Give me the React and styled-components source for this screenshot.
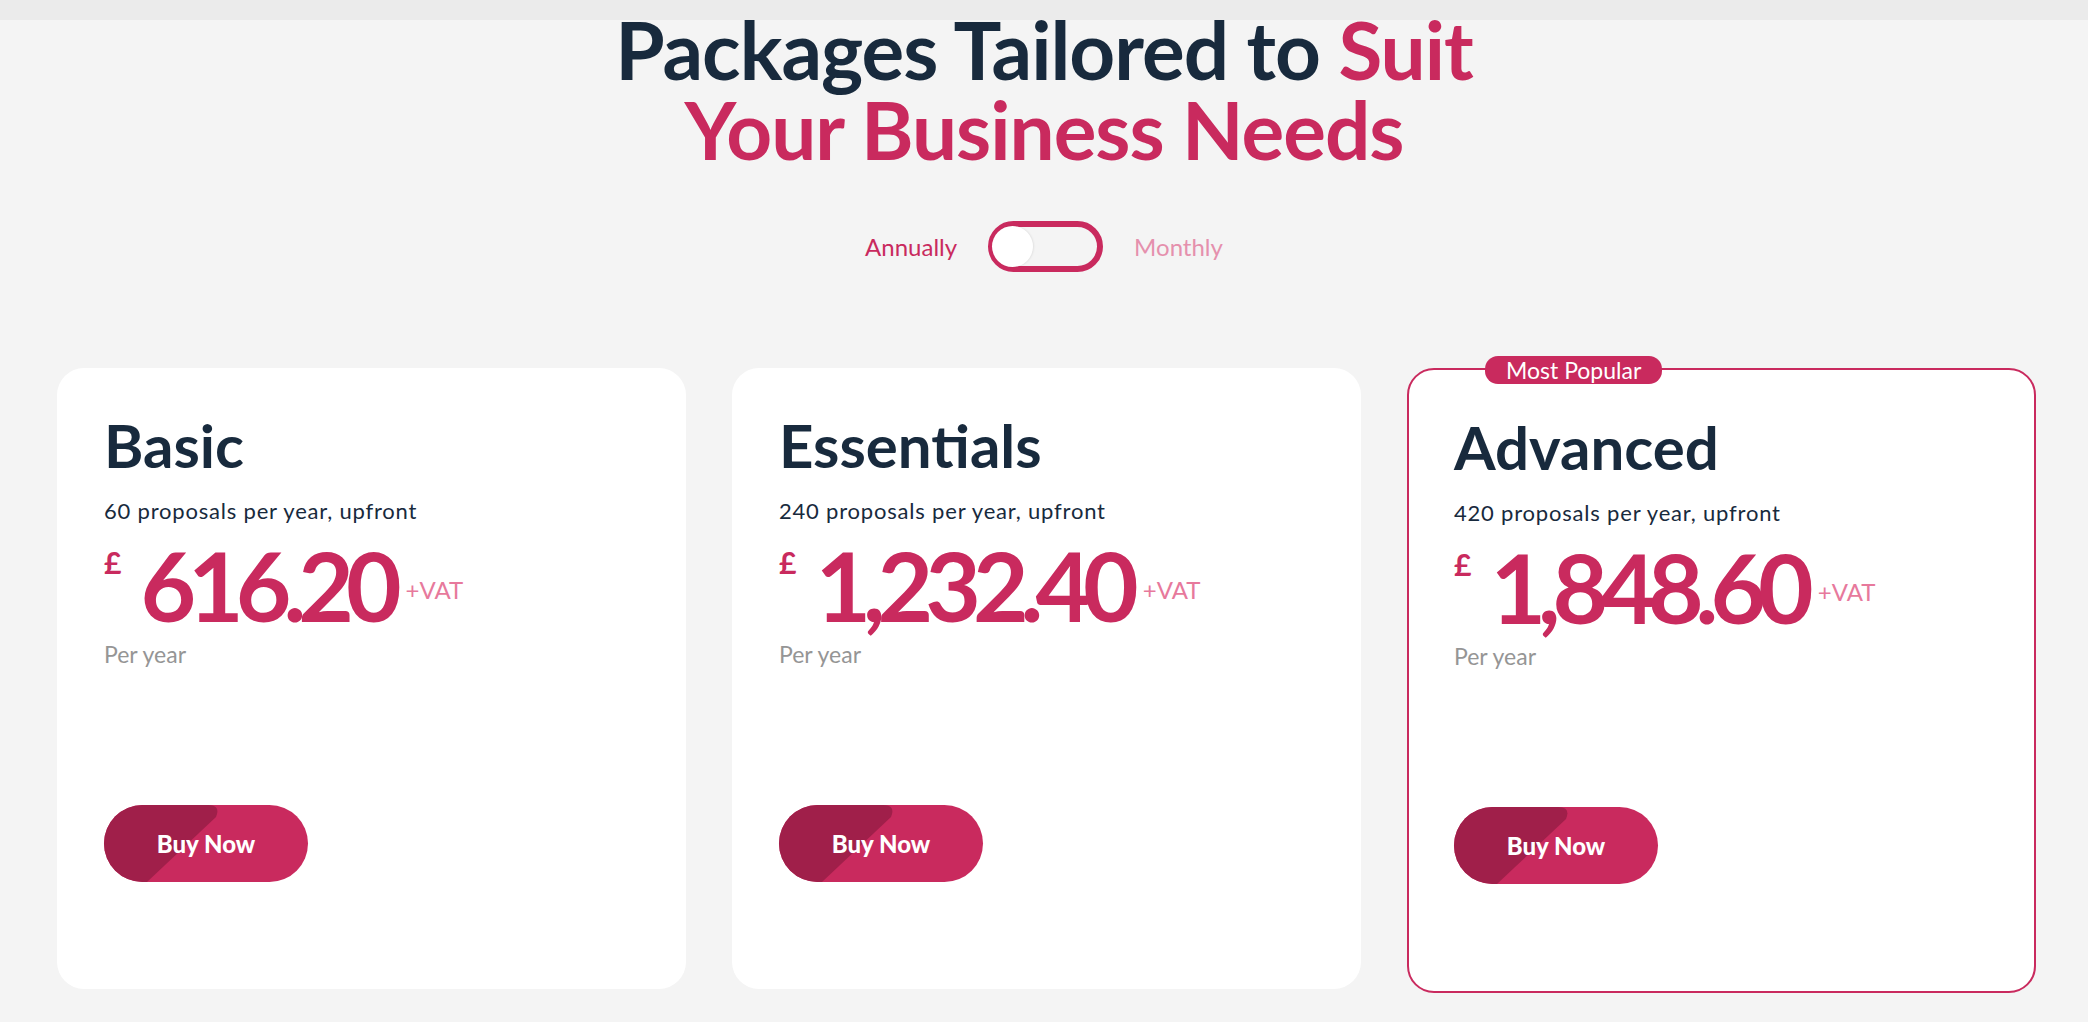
import React, { useState } from 'react';
import styled, { createGlobalStyle } from 'styled-components';

const GlobalStyle = createGlobalStyle`
  body {
    margin: 0;
    background: #f4f4f4;
    font-family: Lato, 'Liberation Sans', sans-serif;
  }
`;

const navy = '#182a3d';
const pink = '#c92a5e';

const Page = styled.div`
  min-height: 1022px;
  background: #f4f4f4;
`;

const TopBar = styled.div`
  height: 20px;
  background: #ebebeb;
`;

const Heading = styled.h1`
  margin: -11px 0 0;
  text-align: center;
  font-size: 80px;
  line-height: 80px;
  font-weight: 700;
  letter-spacing: -1px;
  color: ${navy};

  span {
    color: ${pink};
  }
`;

const ToggleRow = styled.div`
  display: flex;
  justify-content: center;
  align-items: center;
  gap: 31px;
  margin-top: 52px;
`;

const ToggleLabel = styled.span`
  font-size: 24px;
  color: ${({ $active }) => ($active ? pink : '#e590ad')};
  cursor: pointer;
`;

const Track = styled.button`
  position: relative;
  width: 115px;
  height: 51px;
  box-sizing: border-box;
  border: 6px solid ${pink};
  border-radius: 26px;
  background: #f4f4f4;
  padding: 0;
  cursor: pointer;
`;

const Knob = styled.span`
  position: absolute;
  top: -1px;
  left: ${({ $right }) => ($right ? '62px' : '-2px')};
  width: 41px;
  height: 41px;
  border-radius: 50%;
  background: #fff;
  box-shadow: 1px 0 2px rgba(0, 0, 0, 0.08);
`;

const Cards = styled.div`
  display: grid;
  grid-template-columns: repeat(3, 629px);
  gap: 46px;
  padding: 0 52px 0 57px;
  margin-top: 96px;
  align-items: start;
`;

const Card = styled.div`
  position: relative;
  box-sizing: border-box;
  height: ${({ $featured }) => ($featured ? '625px' : '621px')};
  padding: ${({ $featured }) => ($featured ? '41px 45px' : '41px 47px')};
  background: #fff;
  border-radius: 27px;
  border: ${({ $featured }) => ($featured ? `2px solid ${pink}` : 'none')};
  display: flex;
  flex-direction: column;
  align-items: flex-start;
`;

const Badge = styled.div`
  position: absolute;
  top: -14px;
  left: 76px;
  height: 28px;
  padding: 0 21px;
  border-radius: 13px;
  background: ${pink};
  color: #fff;
  font-size: 23px;
  line-height: 28px;
`;

const PlanName = styled.h2`
  margin: 0;
  font-size: 60px;
  line-height: 1.2;
  font-weight: 700;
  color: ${navy};
`;

const Desc = styled.p`
  margin: 17px 0 0;
  font-size: 22px;
  line-height: 1.2;
  letter-spacing: 0.8px;
  color: ${navy};
`;

const PriceRow = styled.div`
  display: flex;
  align-items: flex-start;
  margin-top: 13px;
`;

const Currency = styled.span`
  font-size: 30px;
  line-height: 1;
  font-weight: 700;
  color: ${pink};
  margin: 10px 19px 0 0;
`;

const Amount = styled.span`
  font-size: 96px;
  line-height: 1;
  font-weight: 700;
  letter-spacing: -8px;
  color: ${pink};
`;

const Vat = styled.span`
  font-size: 24px;
  line-height: 1;
  color: #e7799c;
  margin: 41px 0 0 12px;
`;

const PerYear = styled.div`
  margin-top: 8px;
  font-size: 23px;
  line-height: 1.2;
  color: #959595;
`;

const BuyButton = styled.button`
  position: relative;
  overflow: hidden;
  margin-top: 136px;
  width: 204px;
  height: 77px;
  border: none;
  border-radius: 39px;
  background: ${pink};
  color: #fff;
  font-family: inherit;
  font-size: 24px;
  font-weight: 900;
  cursor: pointer;

  svg {
    position: absolute;
    left: 0;
    top: 0;
  }

  span {
    position: relative;
  }
`;

const plans = [
  { name: 'Basic', desc: '60 proposals per year, upfront', price: '616.20' },
  { name: 'Essentials', desc: '240 proposals per year, upfront', price: '1,232.40' },
  { name: 'Advanced', desc: '420 proposals per year, upfront', price: '1,848.60', featured: true },
];

const Shade = () => (
  <svg width="204" height="77" viewBox="0 0 204 77">
    <path d="M0 0 H104 Q117 0 112 12 L43 77 H0 Z" fill="#a01f4a" />
  </svg>
);

export default function App() {
  const [monthly, setMonthly] = useState(false);

  return (
    <Page>
      <GlobalStyle />
      <TopBar />
      <Heading>
        Packages Tailored to <span>Suit</span>
        <br />
        <span>Your Business Needs</span>
      </Heading>

      <ToggleRow>
        <ToggleLabel $active={!monthly} onClick={() => setMonthly(false)}>Annually</ToggleLabel>
        <Track aria-label="Billing period" onClick={() => setMonthly(!monthly)}>
          <Knob $right={monthly} />
        </Track>
        <ToggleLabel $active={monthly} onClick={() => setMonthly(true)}>Monthly</ToggleLabel>
      </ToggleRow>

      <Cards>
        {plans.map((plan) => (
          <Card key={plan.name} $featured={plan.featured}>
            {plan.featured && <Badge>Most Popular</Badge>}
            <PlanName>{plan.name}</PlanName>
            <Desc>{plan.desc}</Desc>
            <PriceRow>
              <Currency>£</Currency>
              <Amount>{plan.price}</Amount>
              <Vat>+VAT</Vat>
            </PriceRow>
            <PerYear>Per year</PerYear>
            <BuyButton type="button">
              <Shade />
              <span>Buy Now</span>
            </BuyButton>
          </Card>
        ))}
      </Cards>
    </Page>
  );
}
